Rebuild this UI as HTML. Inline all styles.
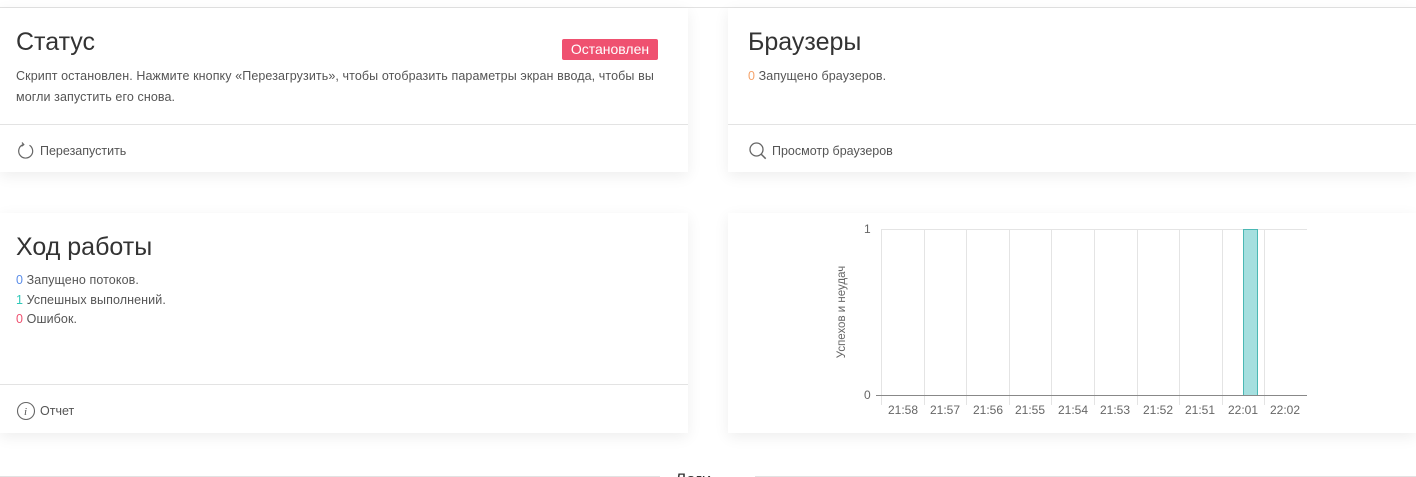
<!DOCTYPE html>
<html><head><meta charset="utf-8"><style>
body{margin:0;width:1416px;height:477px;overflow:hidden;background:#fff;font-family:"Liberation Sans",sans-serif;color:#555;position:relative}
.topline{position:absolute;left:0;right:0;top:7px;border-top:1px solid #e2e2e2}
.card{position:absolute;background:#fff;box-shadow:0 4px 14px rgba(0,0,0,0.07)}
.h{position:absolute;left:16px;font-size:25px;color:#333}
.t{position:absolute;left:16px;font-size:12.5px;line-height:21px;color:#555;letter-spacing:0.1px}
.sep{position:absolute;left:0;right:0;border-top:1px solid #e3e3e3}
.foot{position:absolute;left:16px;font-size:12.5px;color:#555;display:flex;align-items:center;gap:4px}
.badge{position:absolute;left:562px;top:31px;width:96px;height:21px;background:#ef5170;color:#fff;font-size:14px;line-height:21px;text-align:center;border-radius:2px}
</style></head><body>
<div class="topline"></div>
<div class="card" style="left:0;top:8px;width:688px;height:164px">
 <div class="h" style="top:20px">Статус</div>
 <div class="badge">Остановлен</div>
 <div class="t" style="top:58px;width:655px">Скрипт остановлен. Нажмите кнопку «Перезагрузить», чтобы отобразить параметры экран ввода, чтобы вы могли запустить его снова.</div>
 <div class="sep" style="top:116px"></div>
 <div class="foot" style="top:133px"><svg width="20" height="20" viewBox="0 0 20 20"><path d="M13.5 4.2A7 7 0 1 1 7 3.6" fill="none" stroke="#666" stroke-width="1.2"/><path d="M6 1.5l1.8 2.2-2.2 1.6" fill="none" stroke="#666" stroke-width="1.2"/></svg>Перезапустить</div>
</div>
<div class="card" style="left:728px;top:8px;width:688px;height:164px">
 <div class="h" style="left:20px;top:20px">Браузеры</div>
 <div class="t" style="left:20px;top:58px"><span style="color:#f5a36b">0</span> Запущено браузеров.</div>
 <div class="sep" style="top:116px"></div>
 <div class="foot" style="left:20px;top:133px"><svg width="20" height="20" viewBox="0 0 20 20"><circle cx="8.5" cy="8.5" r="6.5" fill="none" stroke="#666" stroke-width="1.3"/><path d="M13.2 13.2l4.5 4.5" stroke="#666" stroke-width="1.5"/></svg>Просмотр браузеров</div>
</div>
<div class="card" style="left:0;top:213px;width:688px;height:220px">
 <div class="h" style="top:20px">Ход работы</div>
 <div class="t" style="top:58px;line-height:19.5px"><span style="color:#5b8de8">0</span> Запущено потоков.<br><span style="color:#2fc8b8">1</span> Успешных выполнений.<br><span style="color:#ef5170">0</span> Ошибок.</div>
 <div class="sep" style="top:171px"></div>
 <div class="foot" style="top:188px"><svg width="20" height="20" viewBox="0 0 20 20"><circle cx="10" cy="10" r="8.5" fill="none" stroke="#666" stroke-width="1.1"/><text x="8" y="14" font-size="11" font-style="italic" fill="#555" font-family="Liberation Serif">i</text></svg>Отчет</div>
</div>
<div class="card" style="left:728px;top:213px;width:688px;height:220px"></div>
<svg style="position:absolute;left:0;top:0" width="1416" height="477">
 <g stroke="#e4e4e4" stroke-width="1">
  <line x1="881" y1="229.5" x2="1307" y2="229.5"/>
  <line x1="881.5" y1="229" x2="881.5" y2="405"/><line x1="924.5" y1="229" x2="924.5" y2="405"/><line x1="966.5" y1="229" x2="966.5" y2="405"/><line x1="1009.5" y1="229" x2="1009.5" y2="405"/><line x1="1051.5" y1="229" x2="1051.5" y2="405"/><line x1="1094.5" y1="229" x2="1094.5" y2="405"/><line x1="1137.5" y1="229" x2="1137.5" y2="405"/><line x1="1179.5" y1="229" x2="1179.5" y2="405"/><line x1="1222.5" y1="229" x2="1222.5" y2="405"/><line x1="1264.5" y1="229" x2="1264.5" y2="405"/>
 </g>
 <rect x="1243.5" y="229.5" width="14" height="166" fill="#a5dfdf" stroke="#4bb8b4"/>
 <line x1="876" y1="395.5" x2="1307" y2="395.5" stroke="#888"/>
 <g font-family="Liberation Sans" font-size="12" fill="#666">
  <text x="864" y="233">1</text><text x="864" y="399">0</text>
  <g text-anchor="middle"><text x="903" y="414">21:58</text><text x="945" y="414">21:57</text><text x="988" y="414">21:56</text><text x="1030" y="414">21:55</text><text x="1073" y="414">21:54</text><text x="1115" y="414">21:53</text><text x="1158" y="414">21:52</text><text x="1200" y="414">21:51</text><text x="1243" y="414">22:01</text><text x="1285" y="414">22:02</text></g>
  <text transform="translate(845,312) rotate(-90)" text-anchor="middle" font-size="11.5">Успехов и неудач</text>
 </g>
 <line x1="0" y1="476.5" x2="1416" y2="476.5" stroke="#e2e2e2"/>
 <rect x="660" y="466" width="95" height="11" fill="#fff"/>
 <text x="675" y="485" font-family="Liberation Sans" font-size="17" fill="#333">Логи</text>
</svg>
</body></html>
